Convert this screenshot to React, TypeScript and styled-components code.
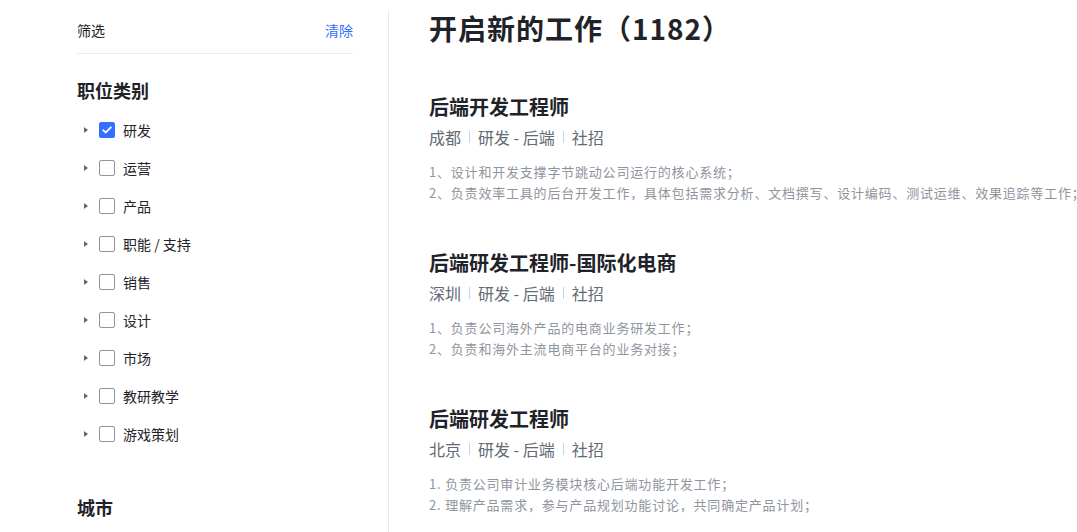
import { ReactElement } from "react"
import styled, { createGlobalStyle } from "styled-components"

const GlobalStyle = createGlobalStyle`
	html, body {
		margin: 0;
		padding: 0;
		background: #fff;
		overflow: hidden;
	}
	body {
		font-family: "Noto Sans CJK SC", "Noto Sans", "Liberation Sans", sans-serif;
		color: #1f2329;
	}
`

type Category = {
	name: string
	checked?: boolean
}

type Job = {
	title: string
	city: string
	category: string
	kind: string
	lines: string[]
}

const categories: Category[] = [
	{ name: "研发", checked: true },
	{ name: "运营" },
	{ name: "产品" },
	{ name: "职能 / 支持" },
	{ name: "销售" },
	{ name: "设计" },
	{ name: "市场" },
	{ name: "教研教学" },
	{ name: "游戏策划" },
]

const jobs: Job[] = [
	{
		title: "后端开发工程师",
		city: "成都",
		category: "研发 - 后端",
		kind: "社招",
		lines: [
			"1、设计和开发支撑字节跳动公司运行的核心系统；",
			"2、负责效率工具的后台开发工作，具体包括需求分析、文档撰写、设计编码、测试运维、效果追踪等工作；",
		],
	},
	{
		title: "后端研发工程师-国际化电商",
		city: "深圳",
		category: "研发 - 后端",
		kind: "社招",
		lines: ["1、负责公司海外产品的电商业务研发工作；", "2、负责和海外主流电商平台的业务对接；"],
	},
	{
		title: "后端研发工程师",
		city: "北京",
		category: "研发 - 后端",
		kind: "社招",
		lines: ["1. 负责公司审计业务模块核心后端功能开发工作；", "2. 理解产品需求，参与产品规划功能讨论，共同确定产品计划；"],
	},
]

const CheckIcon = (): ReactElement => (
	<svg width="10" height="8" viewBox="0 0 10 8" fill="none">
		<path d="M1.2 4.1 L3.8 6.5 L8.8 1.3" stroke="#fff" strokeWidth="1.8" strokeLinecap="round" strokeLinejoin="round" />
	</svg>
)

const App = (): ReactElement => {
	return (
		<S.Page>
			<GlobalStyle />
			<S.Sidebar>
				<S.FilterHeader>
					<span>筛选</span>
					<S.ClearLink>清除</S.ClearLink>
				</S.FilterHeader>
				<S.GroupTitle>职位类别</S.GroupTitle>
				<S.CategoryList>
					{categories.map(c => (
						<S.CategoryItem key={c.name}>
							<S.Caret />
							<S.Checkbox $checked={!!c.checked}>{c.checked && <CheckIcon />}</S.Checkbox>
							<span>{c.name}</span>
						</S.CategoryItem>
					))}
				</S.CategoryList>
				<S.CityTitle>城市</S.CityTitle>
			</S.Sidebar>
			<S.Main>
				<S.PageTitle>开启新的工作（1182）</S.PageTitle>
				{jobs.map(job => (
					<S.JobCard key={job.title + job.city}>
						<S.JobTitle>{job.title}</S.JobTitle>
						<S.JobMeta>
							<span>{job.city}</span>
							<S.MetaSep />
							<span>{job.category}</span>
							<S.MetaSep />
							<span>{job.kind}</span>
						</S.JobMeta>
						<S.JobDesc>
							{job.lines.map(line => (
								<div key={line}>{line}</div>
							))}
						</S.JobDesc>
					</S.JobCard>
				))}
			</S.Main>
		</S.Page>
	)
}

export const S = {
	Page: styled.div`
		display: flex;
		align-items: flex-start;
		padding: 10px 0 0 77px;
		width: 1077px;
		height: 532px;
		box-sizing: border-box;
		overflow: hidden;
	`,
	Sidebar: styled.aside`
		flex: none;
		width: 276px;
		padding-right: 35px;
		border-right: 1px solid #ebebeb;
		min-height: 600px;
	`,
	FilterHeader: styled.div`
		display: flex;
		align-items: center;
		justify-content: space-between;
		box-sizing: border-box;
		height: 44px;
		padding-bottom: 4px;
		border-bottom: 1px solid #ebebeb;
		font-size: 14px;
		color: #1f2329;
	`,
	ClearLink: styled.span`
		color: #3370ff;
		font-size: 14px;
		cursor: pointer;
	`,
	GroupTitle: styled.h3`
		margin: 23px 0 0;
		font-size: 18px;
		line-height: 26px;
		font-weight: 700;
	`,
	CategoryList: styled.ul`
		list-style: none;
		margin: 8px 0 0;
		padding: 0;
	`,
	CategoryItem: styled.li`
		display: flex;
		align-items: center;
		height: 38px;
		font-size: 14px;
		color: #1f2329;
	`,
	Caret: styled.i`
		width: 0;
		height: 0;
		margin: 0 11px 0 7px;
		border-top: 3.5px solid transparent;
		border-bottom: 3.5px solid transparent;
		border-left: 4px solid #646a73;
	`,
	Checkbox: styled.span<{ $checked: boolean }>`
		display: inline-flex;
		align-items: center;
		justify-content: center;
		width: 16px;
		height: 16px;
		margin-right: 8px;
		box-sizing: border-box;
		border-radius: 2px;
		border: 1px solid ${p => (p.$checked ? "#3370ff" : "#8f959e")};
		background: ${p => (p.$checked ? "#3370ff" : "#fff")};
	`,
	CityTitle: styled.h3`
		margin: 41px 0 0;
		font-size: 18px;
		line-height: 26px;
		font-weight: 700;
	`,
	Main: styled.main`
		flex: none;
		padding-left: 40px;
	`,
	PageTitle: styled.h1`
		margin: 0 0 47px;
		font-size: 28px;
		line-height: 36px;
		font-weight: 700;
		letter-spacing: 1px;
		color: #1f2329;
	`,
	JobCard: styled.div`
		margin-bottom: 46px;
	`,
	JobTitle: styled.h2`
		margin: 0 0 4px;
		font-size: 20px;
		line-height: 28px;
		font-weight: 700;
		color: #1f2329;
	`,
	JobMeta: styled.div`
		display: flex;
		align-items: center;
		font-size: 16px;
		line-height: 24px;
		color: #646a73;
	`,
	MetaSep: styled.span`
		display: inline-block;
		width: 1px;
		height: 12px;
		margin: 0 8px;
		background: #d0d3d6;
	`,
	JobDesc: styled.div`
		margin-top: 12px;
		font-size: 13px;
		line-height: 21px;
		letter-spacing: 0.8px;
		color: #8f959e;
		white-space: nowrap;
	`,
}

export default App
